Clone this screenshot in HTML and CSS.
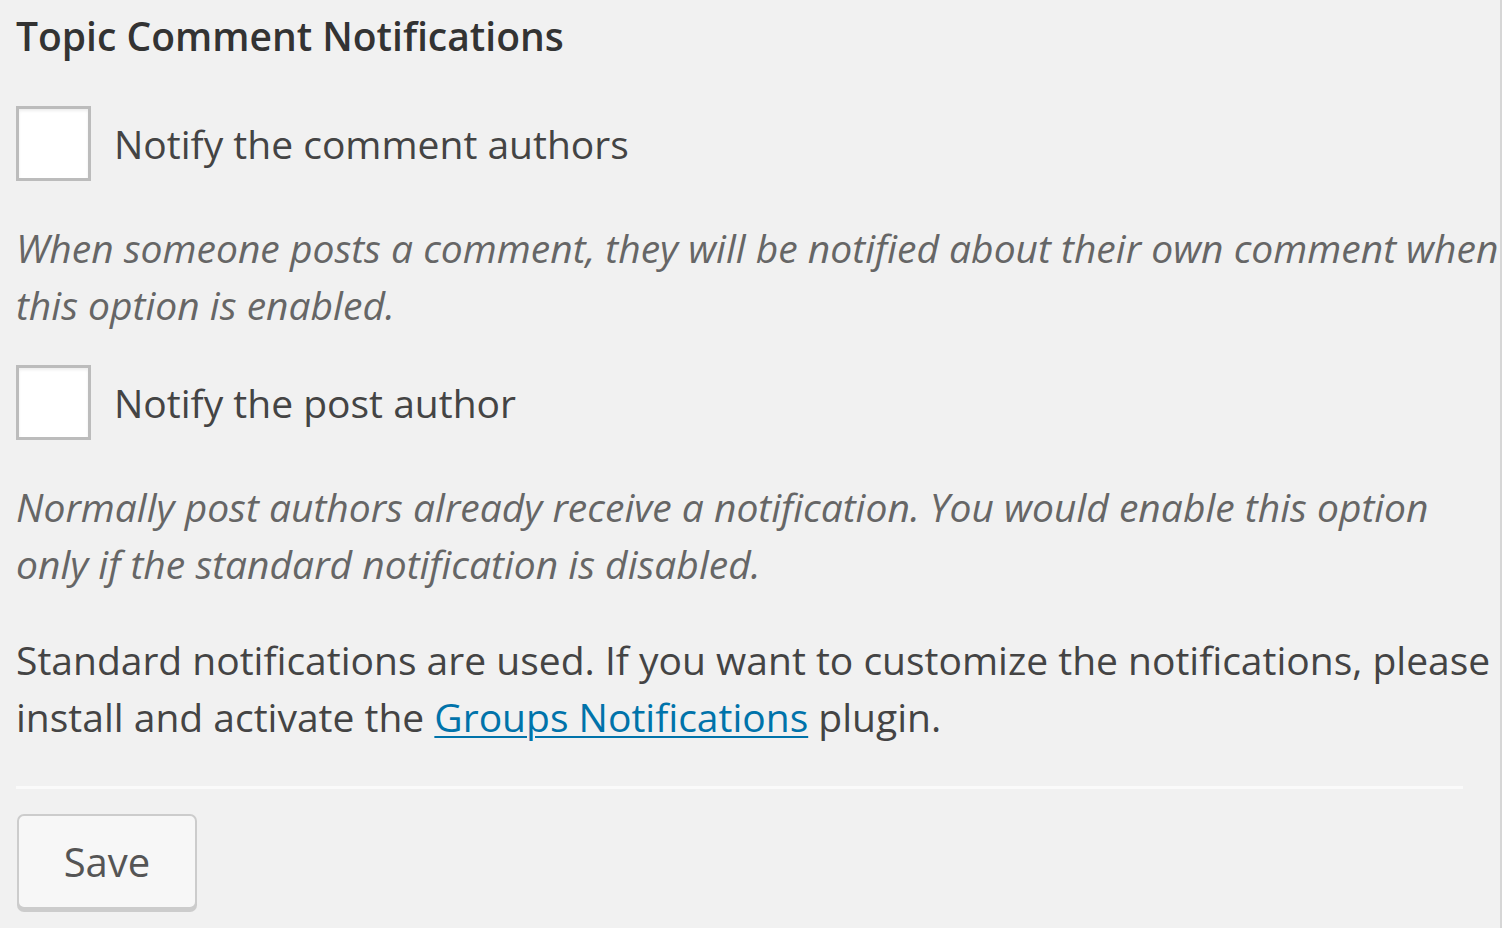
FILE: index.html
```html
<!DOCTYPE html>
<html lang="en">
<head>
<meta charset="utf-8">
<title>Topic Comment Notifications</title>
<link rel="stylesheet" href="styles.css">
</head>
<body>
<div class="wrap">
  <h2 class="title">Topic Comment Notifications</h2>

  <label class="check-row">
    <span class="checkbox"></span>
    <span class="check-label">Notify the comment authors</span>
  </label>
  <p class="description desc-1">When someone posts a comment, they will be notified about their own comment when this option is enabled.</p>

  <label class="check-row row-2">
    <span class="checkbox"></span>
    <span class="check-label">Notify the post author</span>
  </label>
  <p class="description desc-2">Normally post authors already receive a notification. You would enable this option only if the standard notification is disabled.</p>

  <p class="info">Standard notifications are used. If you want to customize the notifications, please install and activate the <a href="#" class="link">Groups Notifications</a> plugin.</p>

  <div class="separator"></div>

  <button class="button" type="button">Save</button>
</div>
</body>
</html>
```

FILE: styles.css
```css
html, body {
  margin: 0;
  padding: 0;
  background: #f1f1f1;
}

body {
  font-family: "Open Sans", "Noto Sans", sans-serif;
  color: #444;
  height: 928px;
  overflow: hidden;
  border-right: 2px solid #d6d6d6;
  box-sizing: border-box;
}

.wrap {
  padding-left: 16px;
  width: 1500px;
  box-sizing: border-box;
}

.title {
  margin: 0;
  padding-top: 10px;
  font-size: 39px;
  line-height: 52px;
  font-weight: 600;
  color: #333;
}

.check-row {
  display: flex;
  align-items: center;
  gap: 23px;
  margin-top: 44px;
  height: 75px;
}

.row-2 {
  margin-top: 32px;
}

.checkbox {
  flex: none;
  width: 75px;
  height: 75px;
  box-sizing: border-box;
  border: 3px solid #bcbcbc;
  background: #fff;
  box-shadow: inset 0 2px 3px rgba(0, 0, 0, 0.07);
}

.check-label {
  font-size: 39px;
  line-height: 57px;
  color: #444;
}

.description {
  margin: 38px 0 0;
  font-size: 39px;
  line-height: 57px;
  font-style: italic;
  color: #666;
}

.info {
  margin: 39px 0 0;
  font-size: 39px;
  line-height: 57px;
  color: #444;
}

.link {
  color: #0073aa;
  text-decoration: underline;
  text-decoration-thickness: 2px;
  text-underline-offset: 4px;
}

.separator {
  margin-top: 41px;
  width: 1447px;
  height: 3px;
  background: #fafafa;
}

.button {
  display: block;
  margin-top: 25px;
  margin-left: 1px;
  width: 180px;
  height: 95px;
  font-family: "Open Sans", "Noto Sans", sans-serif;
  font-size: 40px;
  color: #555;
  background: #f7f7f7;
  border: 2px solid #cccccc;
  border-radius: 7px;
  box-shadow: 0 3px 0 #cccccc;
  padding: 0;
}
```
